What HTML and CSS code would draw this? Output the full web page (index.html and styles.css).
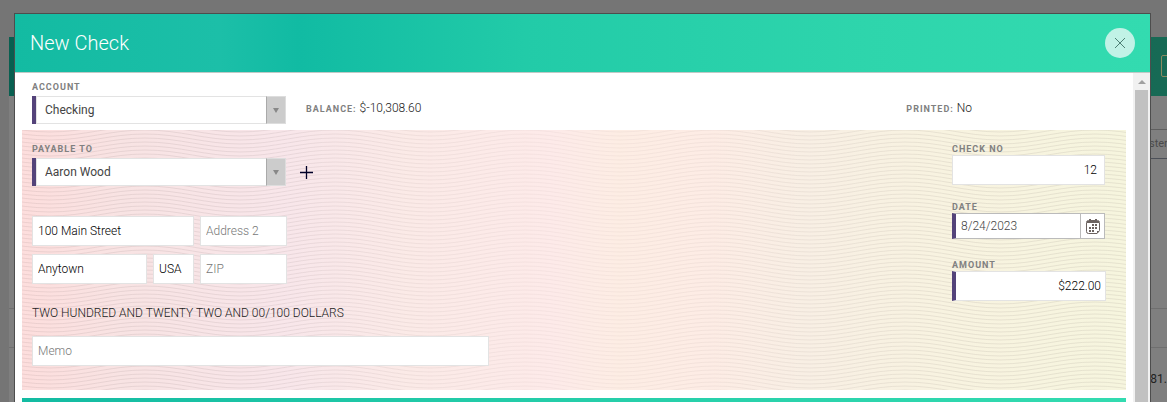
FILE: index.html
```
<!DOCTYPE html>
<html lang="en">
<head>
    <meta charset="UTF-8">
    <meta name="viewport" content="width=device-width, initial-scale=1.0">
    <title>New Check</title>
    <link rel="stylesheet" href="styles.css">
</head>
<body>
    <div class="page" aria-hidden="true">
        <div class="page-bar"><span class="page-bar-icon"></span></div>
        <div class="page-tools"></div>
        <div class="page-filter">ster</div>
        <div class="page-list">
            <div class="page-row"></div>
            <div class="page-row"></div>
            <div class="page-row">81.</div>
        </div>
    </div>

    <div class="modal" role="dialog" aria-labelledby="modalTitle">
        <div class="modal-header">
            <h1 id="modalTitle">New Check</h1>
            <button class="close" type="button" aria-label="Close">
                <svg width="12" height="12" viewBox="0 0 12 12"><path d="M1 1 L11 11 M11 1 L1 11" stroke="#4d7f74" fill="none"/></svg>
            </button>
        </div>

        <div class="modal-content">
            <form class="modal-body">
                <div class="account-row">
                    <div class="field account">
                        <label for="account">Account</label>
                        <div class="select required">
                            <select id="account"><option>Checking</option></select>
                            <span class="arrow"></span>
                        </div>
                    </div>
                    <div class="info"><span class="caption">Balance:</span> $-10,308.60</div>
                    <div class="info printed"><span class="caption">Printed:</span> No</div>
                </div>

                <div class="check">
                    <svg class="waves" width="100%" height="100%">
                        <defs>
                            <pattern id="wave" x="123" width="190" height="4" patternUnits="userSpaceOnUse">
                                <path d="M0 -8 C35 -8 60 2 95 2 S155 -8 190 -8 M0 -4 C35 -4 60 6 95 6 S155 -4 190 -4 M0 0 C35 0 60 10 95 10 S155 0 190 0 M0 4 C35 4 60 14 95 14 S155 4 190 4"/>
                            </pattern>
                        </defs>
                        <rect width="100%" height="100%" fill="url(#wave)"/>
                    </svg>

                    <div class="check-left">
                        <div class="field">
                            <label for="payee">Payable to</label>
                            <div class="payee-row">
                                <div class="select required">
                                    <select id="payee"><option>Aaron Wood</option></select>
                                    <span class="arrow"></span>
                                </div>
                                <button class="add" type="button" aria-label="Add payee">
                                    <svg width="13" height="14" viewBox="0 0 13 14"><path d="M6.5 1 V14 M0 7.5 H13" stroke="#000028" stroke-width="1.3" fill="none"/></svg>
                                </button>
                            </div>
                        </div>
                        <div class="address">
                            <input class="street" type="text" value="100 Main Street" aria-label="Address">
                            <input type="text" placeholder="Address 2" aria-label="Address 2">
                            <input type="text" value="Anytown" aria-label="City">
                            <input type="text" value="USA" aria-label="State">
                            <input type="text" placeholder="ZIP" aria-label="ZIP">
                        </div>
                        <p class="words">TWO HUNDRED AND TWENTY TWO AND 00/100 DOLLARS</p>
                        <input class="memo" type="text" placeholder="Memo" aria-label="Memo">
                    </div>

                    <div class="check-right">
                        <div class="field">
                            <label for="checkNo">Check no</label>
                            <input class="number" id="checkNo" type="text" value="12">
                        </div>
                        <div class="field">
                            <label for="date">Date</label>
                            <div class="date required">
                                <input id="date" type="text" value="8/24/2023">
                                <button type="button" aria-label="Pick a date">
                                    <svg width="14" height="15" viewBox="0 0 14 15">
                                        <path d="M2.5 1.5 H11.5 Q13.5 1.5 13.5 3.5 V11.5 L11 14.5 H2.5 Q.5 14.5 .5 12.5 V3.5 Q.5 1.5 2.5 1.5 Z" fill="#fff" stroke="#6b625f"/>
                                        <path d="M1 2 H13 V4 H1 Z M3 0 H5 V3 H3 Z M9 0 H11 V3 H9 Z M11 12 H13.5 L11 14.5 Z" fill="#6b625f"/>
                                        <path d="M6 6 H8 M9 6 H11 M3 9 H5 M6 9 H8 M9 9 H11 M3 12 H5 M6 12 H8" stroke="#6b625f" stroke-width="2" fill="none"/>
                                    </svg>
                                </button>
                            </div>
                        </div>
                        <div class="field">
                            <label for="amount">Amount</label>
                            <input class="amount required" id="amount" type="text" value="$222.00">
                        </div>
                    </div>
                </div>

                <div class="section-bar"></div>
            </form>

            <div class="scrollbar" aria-hidden="true">
                <span class="scroll-up"></span>
                <span class="scroll-thumb"></span>
            </div>
        </div>
    </div>
</body>
</html>
```
FILE: styles.css
```
* {
    box-sizing: border-box;
}

body {
    display: flex;
    height: 100vh;
    margin: 0;
    padding: 37px 0 0 9px;
    overflow: hidden;
    background: #757575;
    font-family: Roboto, Arial, sans-serif;
    font-size: 12px;
    font-weight: 300;
    color: #222;
}

/* dimmed page under the dialog */
.page {
    flex: 1;
    overflow: hidden;
    background: #7f7f7f;
    font-weight: 400;
    text-align: right;
}

.page-bar {
    display: flex;
    justify-content: flex-end;
    height: 59px;
    padding-top: 18px;
    overflow: hidden;
    background: linear-gradient(90deg, #085f50, #176a55);
}

.page-bar-icon {
    width: 20px;
    height: 22px;
    margin-right: -14px;
    border: 1px solid #8a8a62;
    border-radius: 2px;
}

.page-tools,
.page-filter {
    width: 18px;
    margin-left: auto;
    text-align: left;
}

.page-tools {
    height: 34px;
    border-bottom: 1px solid #5f5f5f;
}

.page-filter {
    height: 29px;
    line-height: 28px;
    border-bottom: 1px solid #4c5058;
    color: #4a4a4a;
    font-size: 11px;
}

.page-list {
    padding-top: 111px;
}

.page-row {
    height: 39px;
    border-bottom: 1px solid #6f6f6f;
    color: #222;
}

.page-row:last-child {
    height: 54px;
    padding-top: 24px;
    border: 0;
}

.modal {
    position: fixed;
    top: 13px;
    right: 16px;
    bottom: 0;
    left: 14px;
    display: flex;
    flex-direction: column;
    border: 1px solid #4d4d4d;
    border-bottom: 0;
    background: #fff;
}

.modal-header {
    display: flex;
    flex-shrink: 0;
    align-items: center;
    justify-content: space-between;
    height: 59px;
    padding: 0 15px;
    border-bottom: 1px solid #bfc9c6;
    background: linear-gradient(90deg, #13bba2 0%, #1cbfa8 18%, #11bba3 25%, #22cba8 45%, #2ed5ac 75%, #33dbb0 100%);
}

.modal-header h1 {
    margin: 0;
    font-size: 20px;
    font-weight: 300;
    color: #fff;
}

button {
    padding: 0;
    border: 0;
    background: none;
    cursor: pointer;
}

.close {
    display: flex;
    align-items: center;
    justify-content: center;
    width: 30px;
    height: 30px;
    border-radius: 50%;
    background: #c1f2e6;
}

.modal-content {
    display: flex;
    flex: 1;
    min-height: 0;
    overflow: hidden;
}

.modal-body {
    display: flex;
    flex: 1;
    flex-direction: column;
    padding: 8px 7px 0;
}

label,
.caption {
    font-size: 9px;
    font-weight: 700;
    letter-spacing: 1px;
    text-transform: uppercase;
    color: #808080;
}

label {
    display: block;
    height: 12px;
    line-height: 12px;
}

input,
select {
    width: 100%;
    min-width: 0;
    height: 30px;
    margin: 0;
    padding: 0 5px;
    border: 1px solid #e3e3e3;
    border-radius: 0;
    background: #fff;
    font: inherit;
    color: #000;
}

input::placeholder {
    color: #777;
}

.required {
    border-left: 4px solid #54437a;
}

.account-row {
    display: flex;
    flex-shrink: 0;
    align-items: flex-start;
    height: 49px;
    padding: 0 10px;
}

.select {
    display: flex;
    width: 254px;
    height: 28px;
    background: #fff;
}

.account .select {
    margin-top: 3px;
}

.select select {
    flex: 1;
    height: 28px;
    padding: 0 8px;
    border-right: 0;
    appearance: none;
    font-weight: 400;
    color: #444;
}

.arrow {
    display: flex;
    align-items: center;
    justify-content: center;
    width: 20px;
    border: 1px solid #ddd;
    border-left-color: #aaa;
    background: #ccc;
}

.arrow::before {
    content: "";
    border: 3px solid transparent;
    border-top: 5px solid #888;
    border-bottom: 0;
}

.info {
    margin: 19px 0 0 20px;
    line-height: 16px;
}

.info.printed {
    margin-left: auto;
    margin-right: 144px;
}

/* check form */
.check {
    position: relative;
    display: flex;
    flex-shrink: 0;
    justify-content: space-between;
    min-height: 260px;
    padding: 13px 20px 24px 10px;
    background: linear-gradient(90deg, #fddedd 0%, #f8e3e3 9%, #f8e6ea 24%, #fbeae7 35%, #fdeae9 48%, #fdede4 54%, #fdece5 62%, #f8efe4 71%, #f8f3e0 84%, #f6f5de 100%);
}

.waves {
    position: absolute;
    top: 0;
    left: 0;
    fill: none;
    mask-image: linear-gradient(90deg, #000 20%, rgba(0, 0, 0, 0.4) 50%, #000 85%);
}

.waves path {
    stroke: #605050;
    stroke-opacity: 0.11;
}

.check-left,
.check-right {
    position: relative;
}

.payee-row {
    display: flex;
    align-items: center;
    gap: 14px;
    margin-top: 3px;
}

.add,
.date button {
    display: flex;
    align-items: center;
    justify-content: center;
}

.address {
    display: grid;
    grid-template-columns: 115px 41px 87px;
    gap: 8px 6px;
    margin-top: 30px;
}

.street {
    grid-column: span 2;
}

.words {
    margin: 21px 0 14px;
    line-height: 17px;
}

.memo {
    width: 457px;
}

.check-right {
    display: flex;
    flex-direction: column;
    width: 154px;
}

.check-right .field {
    height: 58px;
}

.number {
    width: 153px;
    padding-right: 7px;
    text-align: right;
}

.date {
    display: flex;
    width: 153px;
    height: 26px;
    border-top: 1px solid #bbb;
    border-bottom: 1px solid #bbb;
    background: #fff;
}

.date input {
    flex: 1;
    height: 24px;
    border: 0;
    color: #444;
}

.date button {
    width: 25px;
    border: 1px solid #bbb;
    border-width: 0 1px;
}

input.amount {
    padding-right: 4px;
    border-left: 4px solid #54437a;
    text-align: right;
}

.section-bar {
    flex: 1;
    margin-top: 8px;
    background: linear-gradient(90deg, #13bba2, #22cba8 40%, #33dbb0);
}

.scrollbar {
    display: flex;
    flex-direction: column;
    align-items: center;
    width: 17px;
    background: #f1f1f1;
}

.scroll-up {
    margin: 7px 0 6px;
    border: 4px solid transparent;
    border-top: 0;
    border-bottom: 4px solid #a0a0a0;
}

.scroll-thumb {
    flex: 1;
    width: 13px;
    background: #c1c1c1;
}
```
